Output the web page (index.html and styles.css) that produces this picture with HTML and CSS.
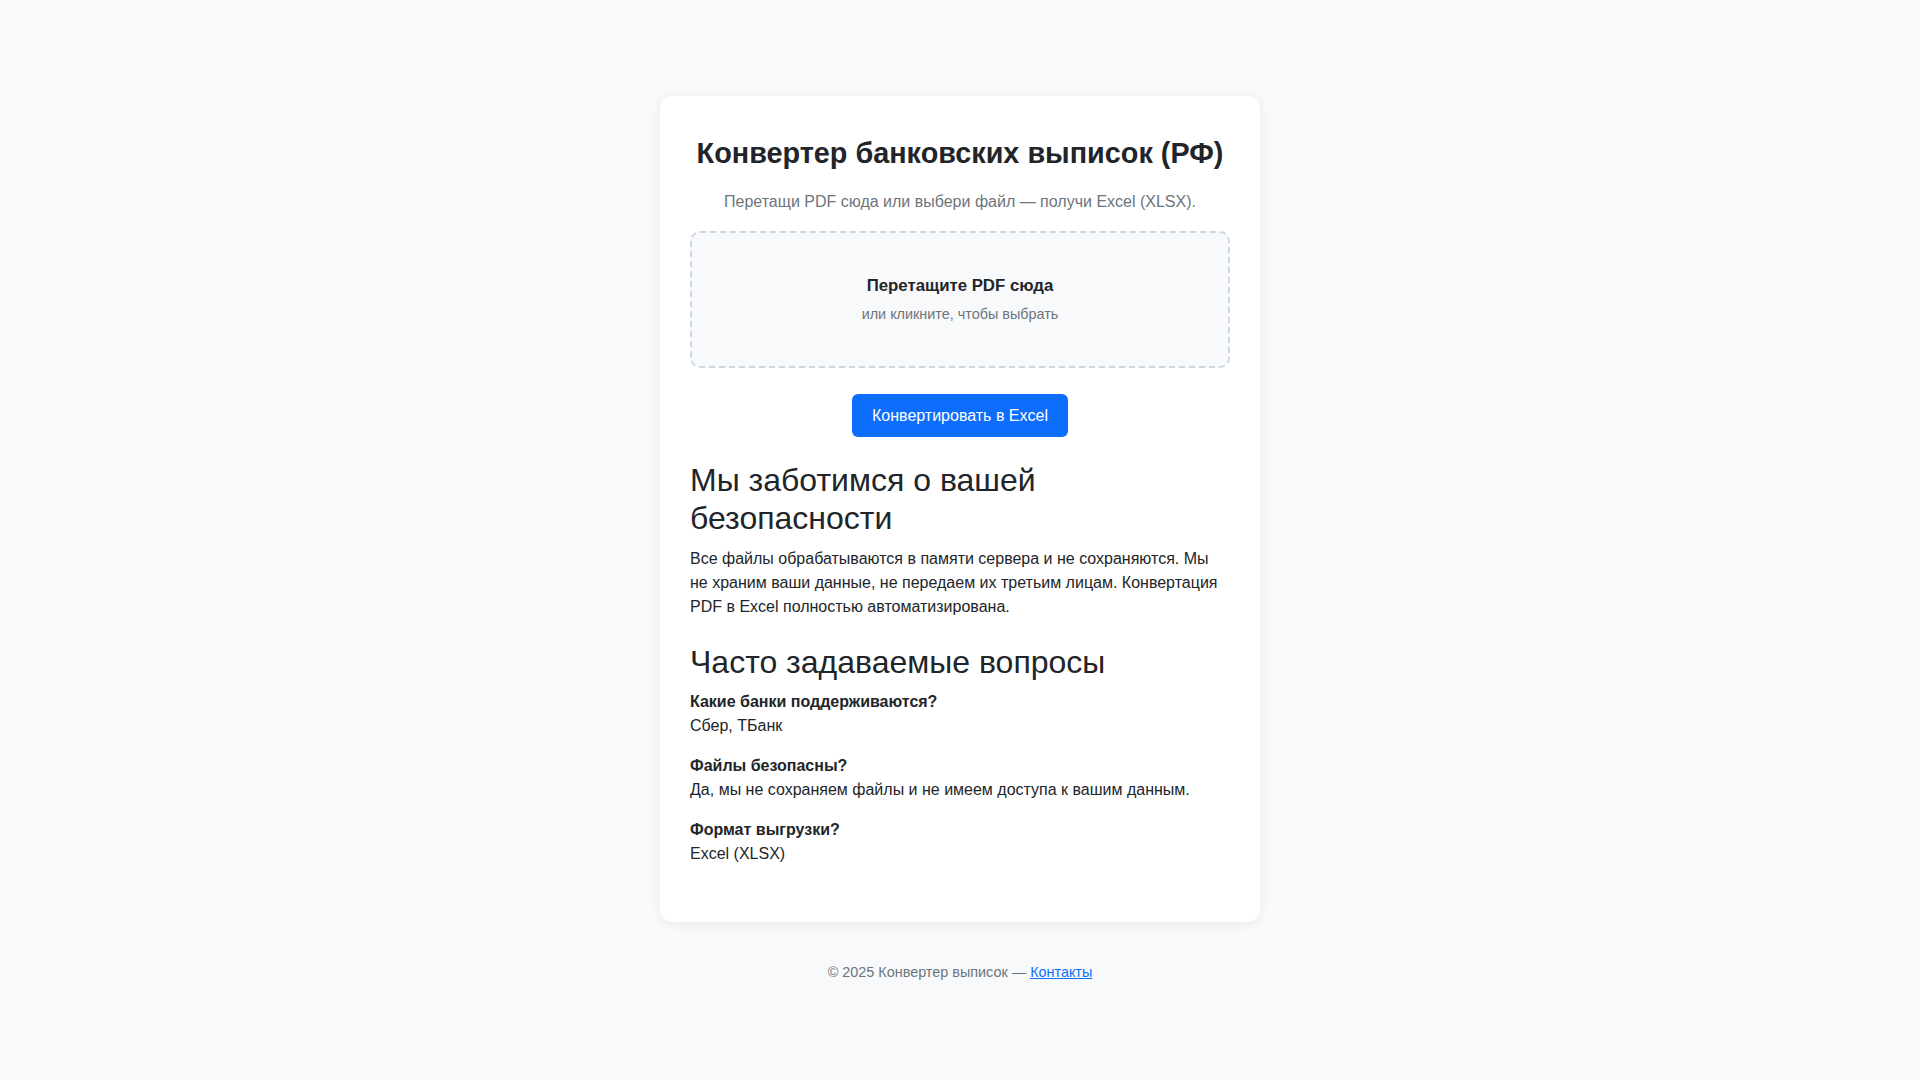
FILE: index.html
```html
<!DOCTYPE html>
<html lang="ru">
<head>
<meta charset="utf-8">
<title>Конвертер банковских выписок (РФ)</title>
<link rel="stylesheet" href="styles.css">
</head>
<body>
<main class="card">
  <h1 class="title">Конвертер банковских выписок (РФ)</h1>
  <p class="subtitle">Перетащи PDF сюда или выбери файл — получи Excel (XLSX).</p>
  <div class="dropzone">
    <div class="drop-main">Перетащите PDF сюда</div>
    <div class="drop-sub">или кликните, чтобы выбрать</div>
  </div>
  <div class="actions">
    <button class="btn" type="button">Конвертировать в Excel</button>
  </div>
  <h2 class="section-title">Мы заботимся о вашей безопасности</h2>
  <p class="text">Все файлы обрабатываются в памяти сервера и не сохраняются. Мы не храним ваши данные, не передаем их третьим лицам. Конвертация PDF в Excel полностью автоматизирована.</p>
  <h2 class="section-title">Часто задаваемые вопросы</h2>
  <div class="faq-item">
    <div class="q">Какие банки поддерживаются?</div>
    <div class="a">Сбер, ТБанк</div>
  </div>
  <div class="faq-item">
    <div class="q">Файлы безопасны?</div>
    <div class="a">Да, мы не сохраняем файлы и не имеем доступа к вашим данным.</div>
  </div>
  <div class="faq-item">
    <div class="q">Формат выгрузки?</div>
    <div class="a">Excel (XLSX)</div>
  </div>
</main>
<footer class="footer">© 2025 Конвертер выписок — <a href="#" class="footer-link">Контакты</a></footer>
</body>
</html>
```
FILE: styles.css
```css
html, body {
  margin: 0;
  padding: 0;
}
body {
  background: #f8f9fa;
  font-family: "Liberation Sans", Arial, sans-serif;
  font-size: 16px;
  line-height: 1.5;
  color: #212529;
  padding-top: 96px;
}
.card {
  display: block;
  width: 600px;
  box-sizing: border-box;
  margin: 0 auto;
  background: #ffffff;
  border-radius: 12px;
  box-shadow: 0 2px 12px rgba(0, 0, 0, 0.06);
  padding: 41px 30px 40px;
}
.title {
  margin: 0 0 23px;
  font-size: 28.8px;
  font-weight: 700;
  line-height: normal;
  text-align: center;
}
.subtitle {
  margin: 0 0 20px;
  text-align: center;
  line-height: normal;
  color: #6c757d;
}
.dropzone {
  border: 2px dashed #ced6e0;
  border-radius: 10px;
  background: #f8f9fb;
  padding: 40px 20px;
  text-align: center;
}
.drop-main {
  font-size: 16.8px;
  font-weight: 700;
}
.drop-sub {
  margin-top: 6px;
  font-size: 14.4px;
  color: #6c757d;
}
.actions {
  display: flex;
  justify-content: center;
  margin-top: 26px;
}
.btn {
  font-family: inherit;
  font-size: 16px;
  line-height: 1.2;
  color: #ffffff;
  background: #0d6efd;
  border: 0;
  border-radius: 6px;
  padding: 12px 20px;
  cursor: pointer;
}
.section-title {
  font-size: 32px;
  font-weight: 400;
  line-height: 1.2;
  margin: 24px 0 9px;
}
.text {
  margin: 0 0 16px;
}
.faq-item {
  margin-bottom: 16px;
}
.q {
  font-weight: 700;
}
.footer {
  margin-top: 40px;
  text-align: center;
  font-size: 14.4px;
  color: #6c757d;
}
.footer-link {
  color: #0d6efd;
  text-decoration: underline;
}
```
